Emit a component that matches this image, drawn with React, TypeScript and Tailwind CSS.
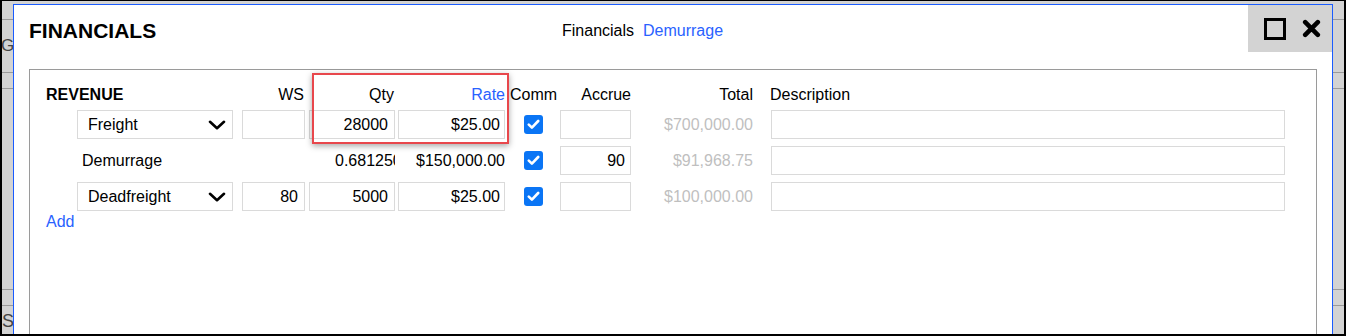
import React from "react";

const cols = "grid grid-cols-[192px_68px_90px_109px_55px_71px_122px_532px]";

function Select({ label }: { label: string }) {
  return (
    <div className="ml-[31px] flex h-[29px] w-[156px] items-center justify-between border border-[#dadada] bg-white pl-[10px] pr-[6px]">
      <span>{label}</span>
      <svg width="18" height="10" viewBox="0 0 18 10" className="shrink-0">
        <polyline points="2,1.8 9,8.2 16,1.8" fill="none" stroke="#000" strokeWidth="2.6" strokeLinecap="round" strokeLinejoin="round" />
      </svg>
    </div>
  );
}

function Field({ value = "", w, ml, pr = "pr-[6px]" }: { value?: string; w: string; ml: string; pr?: string }) {
  return (
    <input
      readOnly
      value={value}
      className={`${w} ${ml} ${pr} h-[29px] border border-[#dadada] bg-white text-right text-[16px] text-black outline-none`}
    />
  );
}

function Check() {
  return (
    <div className="ml-[19px] flex h-[19px] w-[19px] items-center justify-center rounded-[3px] bg-[#0a75f5]">
      <svg width="13" height="11" viewBox="0 0 13 11">
        <polyline points="1.8,5.6 4.9,8.6 11.2,2" fill="none" stroke="#fff" strokeWidth="2.6" strokeLinecap="round" strokeLinejoin="round" />
      </svg>
    </div>
  );
}

type Row = {
  name: string;
  select: boolean;
  ws: string | null;
  qty: string;
  rate: string;
  accrue: string;
  total: string;
};

const rows: Row[] = [
  { name: "Freight", select: true, ws: "", qty: "28000", rate: "$25.00", accrue: "", total: "$700,000.00" },
  { name: "Demurrage", select: false, ws: null, qty: "0.6812500", rate: "$150,000.00", accrue: "90", total: "$91,968.75" },
  { name: "Deadfreight", select: true, ws: "80", qty: "5000", rate: "$25.00", accrue: "", total: "$100,000.00" },
];

export default function App() {
  return (
    <div className="relative h-[336px] w-[1346px] overflow-hidden border-b-2 border-l-2 border-r-2 border-t border-black bg-[#d3d3d3] font-['Liberation_Sans',Arial,sans-serif] text-[16px] text-black">
      {/* page behind the dialog */}
      <div className="flex flex-col text-[#444]">
        <div className="h-[19px] border-b border-[#9a9a9a]" />
        <div className="flex h-[53px] items-center border-b border-[#9a9a9a] pl-0 text-[17px] -ml-[1px]">GC</div>
        <div className="h-[16px] border-b border-[#9a9a9a]" />
        <div className="h-[201px] border-b border-[#9a9a9a]" />
        <div className="h-[16px] border-b border-[#9a9a9a]" />
        <div className="flex h-[30px] items-center text-[18px]">S</div>
      </div>

      {/* dialog */}
      <div className="absolute left-[11px] top-[3px] h-[400px] w-[1320px] border border-[#1a5cff] bg-white">
        <div className="flex h-[47px]">
          <div className="w-[548px] pl-[15px] pt-[14px] text-[21px] font-bold leading-[24px]">FINANCIALS</div>
          <div className="pt-[16px] leading-[20px]">
            <span>Financials</span>
            <span className="ml-[9px] text-[#2962ff]">Demurrage</span>
          </div>
          <div className="ml-auto flex h-[47px] w-[84px] items-center bg-[#d3d3d3] pl-[16px]">
            <div className="h-[22px] w-[22px] border-[3px] border-black" />
            <svg width="19" height="19" viewBox="0 0 19 19" className="ml-[16px]">
              <path d="M3.2 3.2 L15.8 15.8 M15.8 3.2 L3.2 15.8" stroke="#000" strokeWidth="4.6" strokeLinecap="round" />
            </svg>
          </div>
        </div>

        <div className="mx-[15px] mt-[17px] h-[300px] border border-[#9a9a9a] pl-[16px] pt-[15px]">
          <div className={`${cols} h-[20px] items-center leading-[20px]`}>
            <div className="font-bold">REVENUE</div>
            <div className="pr-[2px] text-right">WS</div>
            <div className="pr-[2px] text-right">Qty</div>
            <div className="text-right text-[#2962ff]">Rate</div>
            <div className="pl-[5px]">Comm</div>
            <div className="text-right">Accrue</div>
            <div className="text-right">Total</div>
            <div className="pl-[17px]">Description</div>
          </div>

          <div className="mt-[5px] flex flex-col gap-[7px]">
            {rows.map((r) => (
              <div key={r.name} className={`${cols} h-[29px] items-center`}>
                <div>{r.select ? <Select label={r.name} /> : <div className="pl-[36px]">{r.name}</div>}</div>
                <div>{r.ws !== null && <Field value={r.ws} w="w-[63px]" ml="ml-[4px]" />}</div>
                <div>
                  {r.select ? (
                    <Field value={r.qty} w="w-[86px]" ml="ml-[3px]" />
                  ) : (
                    <div className="ml-[29px] w-[60px] overflow-hidden whitespace-nowrap">{r.qty}</div>
                  )}
                </div>
                <div>
                  {r.select ? (
                    <Field value={r.rate} w="w-[107px]" ml="ml-[2px]" pr="pr-[4px]" />
                  ) : (
                    <div className="text-right">{r.rate}</div>
                  )}
                </div>
                <div>
                  <Check />
                </div>
                <div>
                  <Field value={r.accrue} w="w-[71px]" ml="ml-0" pr="pr-[5px]" />
                </div>
                <div className="text-right text-[#bfbfbf]">{r.total}</div>
                <div>
                  <input readOnly value="" className="ml-[18px] h-[29px] w-[514px] border border-[#dadada] bg-white outline-none" />
                </div>
              </div>
            ))}
          </div>

          <div className="mt-[1px] leading-[20px] text-[#2962ff]">Add</div>
        </div>
      </div>

      {/* highlight annotation */}
      <div className="absolute left-[310px] top-[72px] h-[71px] w-[197px] border-2 border-[#e8474c] shadow-[0_2px_6px_rgba(0,0,0,0.35)]" />
    </div>
  );
}
